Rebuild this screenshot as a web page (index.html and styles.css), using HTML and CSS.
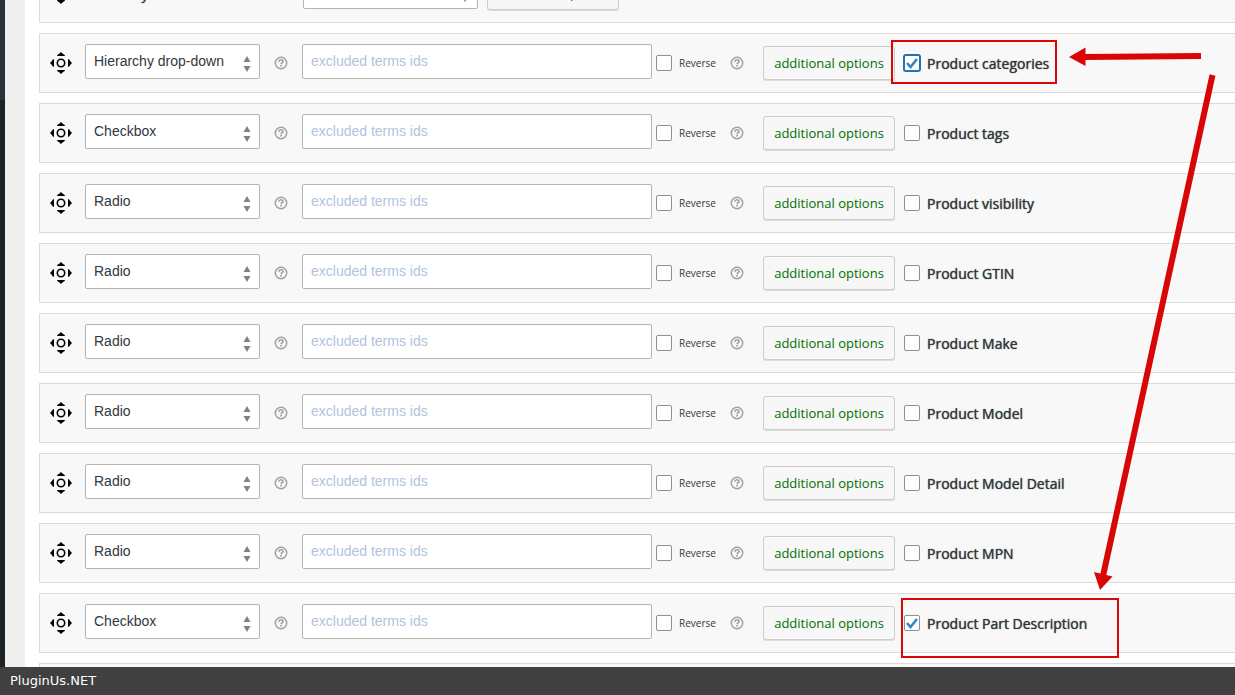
FILE: index.html
```
<!DOCTYPE html>
<html lang="en">
<head>
  <meta charset="utf-8">
  <title>Products filter settings</title>
  <link rel="stylesheet" href="styles.css">
</head>
<body>
  <svg class="sprite" aria-hidden="true">
    <symbol id="move" viewBox="0 0 22 22">
      <path d="M11 0c1 1.200 2.500 2.200 3.800 3v1H7.200V3C8.500 2.200 10 1.200 11 0zM11 22c1-1.200 2.500-2.200 3.800-3v-1H7.200v1c1.300.800 2.800 1.800 3.800 3zM0 11c1.200-1 2.200-2.500 3-3.800h1v7.600H3C2.200 13.500 1.200 12 0 11zM22 11c-1.200-1-2.200-2.500-3-3.800h-1v7.600h1c.800-1.300 1.800-2.800 3-3.800z"/>
      <circle cx="11" cy="11" r="3.700" fill="none" stroke="#000" stroke-width="1.600"/>
    </symbol>
    <symbol id="help" viewBox="0 0 14 14">
      <circle cx="7" cy="7" r="5.700" fill="none" stroke="#a0a0a0" stroke-width="1.500"/>
      <path d="M5 5.700c0-1.200.900-1.900 2-1.900s2 .700 2 1.700C9 6.800 7.100 6.700 7.100 8.200" fill="none" stroke="#a0a0a0" stroke-width="1.600"/>
      <path d="M6.200 9h1.700v1.500H6.200z" fill="#a0a0a0"/>
    </symbol>
  </svg>

  <div class="page">
    <div class="admin-menu"></div>
    <main class="content">
      <ul class="options">
        <li class="option">
          <svg class="move"><use href="#move"/></svg>
          <label class="option-title" for="price">Search by Price</label>
          <select class="control" id="price"><option>No</option></select>
          <button class="button" type="button">additional options</button>
        </li>
        <li class="option">
          <svg class="move"><use href="#move"/></svg>
          <select class="control" aria-label="Type"><option>Hierarchy drop-down</option></select>
          <svg class="help"><use href="#help"/></svg>
          <input class="control excluded" type="text" placeholder="excluded terms ids">
          <label class="reverse"><input type="checkbox">Reverse</label>
          <svg class="help"><use href="#help"/></svg>
          <button class="button" type="button">additional options</button>
          <label class="term"><input class="focused" type="checkbox" checked>Product categories</label>
        </li>
        <li class="option">
          <svg class="move"><use href="#move"/></svg>
          <select class="control" aria-label="Type"><option>Checkbox</option></select>
          <svg class="help"><use href="#help"/></svg>
          <input class="control excluded" type="text" placeholder="excluded terms ids">
          <label class="reverse"><input type="checkbox">Reverse</label>
          <svg class="help"><use href="#help"/></svg>
          <button class="button" type="button">additional options</button>
          <label class="term"><input type="checkbox">Product tags</label>
        </li>
        <li class="option">
          <svg class="move"><use href="#move"/></svg>
          <select class="control" aria-label="Type"><option>Radio</option></select>
          <svg class="help"><use href="#help"/></svg>
          <input class="control excluded" type="text" placeholder="excluded terms ids">
          <label class="reverse"><input type="checkbox">Reverse</label>
          <svg class="help"><use href="#help"/></svg>
          <button class="button" type="button">additional options</button>
          <label class="term"><input type="checkbox">Product visibility</label>
        </li>
        <li class="option">
          <svg class="move"><use href="#move"/></svg>
          <select class="control" aria-label="Type"><option>Radio</option></select>
          <svg class="help"><use href="#help"/></svg>
          <input class="control excluded" type="text" placeholder="excluded terms ids">
          <label class="reverse"><input type="checkbox">Reverse</label>
          <svg class="help"><use href="#help"/></svg>
          <button class="button" type="button">additional options</button>
          <label class="term"><input type="checkbox">Product GTIN</label>
        </li>
        <li class="option">
          <svg class="move"><use href="#move"/></svg>
          <select class="control" aria-label="Type"><option>Radio</option></select>
          <svg class="help"><use href="#help"/></svg>
          <input class="control excluded" type="text" placeholder="excluded terms ids">
          <label class="reverse"><input type="checkbox">Reverse</label>
          <svg class="help"><use href="#help"/></svg>
          <button class="button" type="button">additional options</button>
          <label class="term"><input type="checkbox">Product Make</label>
        </li>
        <li class="option">
          <svg class="move"><use href="#move"/></svg>
          <select class="control" aria-label="Type"><option>Radio</option></select>
          <svg class="help"><use href="#help"/></svg>
          <input class="control excluded" type="text" placeholder="excluded terms ids">
          <label class="reverse"><input type="checkbox">Reverse</label>
          <svg class="help"><use href="#help"/></svg>
          <button class="button" type="button">additional options</button>
          <label class="term"><input type="checkbox">Product Model</label>
        </li>
        <li class="option">
          <svg class="move"><use href="#move"/></svg>
          <select class="control" aria-label="Type"><option>Radio</option></select>
          <svg class="help"><use href="#help"/></svg>
          <input class="control excluded" type="text" placeholder="excluded terms ids">
          <label class="reverse"><input type="checkbox">Reverse</label>
          <svg class="help"><use href="#help"/></svg>
          <button class="button" type="button">additional options</button>
          <label class="term"><input type="checkbox">Product Model Detail</label>
        </li>
        <li class="option">
          <svg class="move"><use href="#move"/></svg>
          <select class="control" aria-label="Type"><option>Radio</option></select>
          <svg class="help"><use href="#help"/></svg>
          <input class="control excluded" type="text" placeholder="excluded terms ids">
          <label class="reverse"><input type="checkbox">Reverse</label>
          <svg class="help"><use href="#help"/></svg>
          <button class="button" type="button">additional options</button>
          <label class="term"><input type="checkbox">Product MPN</label>
        </li>
        <li class="option">
          <svg class="move"><use href="#move"/></svg>
          <select class="control" aria-label="Type"><option>Checkbox</option></select>
          <svg class="help"><use href="#help"/></svg>
          <input class="control excluded" type="text" placeholder="excluded terms ids">
          <label class="reverse"><input type="checkbox">Reverse</label>
          <svg class="help"><use href="#help"/></svg>
          <button class="button" type="button">additional options</button>
          <label class="term"><input type="checkbox" checked>Product Part Description</label>
        </li>
        <li class="option"></li>
      </ul>
    </main>
  </div>

  <footer class="footer">PluginUs.NET</footer>

  <!-- red marks over the two checked terms -->
  <svg class="marks" width="1235" height="695" aria-hidden="true">
    <g fill="none" stroke="#d80606">
      <rect x="892" y="41" width="164" height="42" stroke-width="2"/>
      <rect x="902" y="599" width="216" height="58" stroke-width="2"/>
      <path d="M1201 56L1084 57M1212.500 75L1103 576" stroke-width="6"/>
    </g>
    <path d="M1069 57l16.500-9.500v18.500zM1100 590l-6-18 18.500 4.500z" fill="#d80606"/>
  </svg>
</body>
</html>
```
FILE: styles.css
```
* {
  box-sizing: border-box;
}
body {
  margin: 0;
  height: 100vh;
  display: flex;
  flex-direction: column;
  overflow: hidden;
  background: #fff;
  color: #32373c;
  font-family: "Open Sans", sans-serif;
}
.sprite {
  position: absolute;
  width: 0;
  height: 0;
}
.page {
  flex: 1;
  min-height: 0;
  display: flex;
  overflow: hidden;
}
.admin-menu {
  width: 25px;
  flex-shrink: 0;
  border-right: 20px solid #efefef;
  background: linear-gradient(#2c3338 100px, #1d2327 100px);
}
.content {
  flex: 1;
  min-width: 0;
  padding-left: 14px;
}
/* list is scrolled part way through its first row */
.options {
  list-style: none;
  margin: -37px 0 0;
  padding: 0;
  display: flex;
  flex-direction: column;
  gap: 10px;
}
.option {
  display: flex;
  align-items: center;
  height: 60px;
  padding-left: 10px;
  background: #f8f8f8;
  border: 1px solid #dbdbdb;
  border-right: none;
  white-space: nowrap;
}
.option > * {
  flex-shrink: 0;
}
.move {
  width: 22px;
  height: 22px;
  margin-right: 13px;
}
.option-title {
  width: 218px;
}
.option-title,
.term {
  font-size: 14px;
  text-shadow: 0 0 1px #32373c;
}
.option-title ~ .button {
  margin-left: 9px;
}
.control {
  width: 175px;
  height: 35px;
  margin: 0 0 3px;
  padding: 0 8px 2px;
  border: 1px solid #b4b4b4;
  border-radius: 2px;
  background: #fff;
  color: #32373c;
  font-family: "Liberation Sans", Arial, sans-serif;
  font-size: 14px;
}
select.control {
  appearance: none;
  background: #fff url("data:image/svg+xml,%3Csvg xmlns='http://www.w3.org/2000/svg' width='8' height='16'%3E%3Cpath d='M4 0l3.500 6h-7zM4 16l3.500-6h-7z' fill='%23808085'/%3E%3C/svg%3E") no-repeat right 8px top 11px;
}
.excluded {
  width: 350px;
}
.excluded::placeholder {
  color: #b0c4de;
  opacity: 1;
}
.help {
  width: 14px;
  height: 14px;
  margin: 0 14px;
}
input[type="checkbox"] {
  appearance: none;
  width: 16px;
  height: 16px;
  margin: 0 7px 0 0;
  border: 1px solid #8c8f94;
  border-radius: 2px;
  background: #fff center no-repeat;
}
input[type="checkbox"]:checked {
  background-image: url("data:image/svg+xml,%3Csvg xmlns='http://www.w3.org/2000/svg' width='12' height='12'%3E%3Cpath d='M1 6l3.500 4L11 2' fill='none' stroke='%233582c4' stroke-width='2.600'/%3E%3C/svg%3E");
}
input[type="checkbox"].focused {
  border-color: #2271b1;
  box-shadow: 0 0 0 1px #2271b1;
}
.reverse,
.term {
  display: flex;
  align-items: center;
}
.reverse {
  width: 60px;
  margin-left: 4px;
  font-size: 10px;
}
.reverse + .help {
  margin-right: 19px;
}
.button {
  width: 132px;
  height: 34px;
  padding: 0;
  border: 1px solid #ccc;
  border-radius: 3px;
  background: #f7f7f7;
  box-shadow: 0 1px 0 #ddd;
  color: #007000;
  font-family: "Open Sans", sans-serif;
  font-size: 13px;
}
.term {
  margin-left: 9px;
}
.footer {
  height: 28px;
  padding-left: 10px;
  background: #404040;
  color: #fff;
  font-family: "DejaVu Sans", sans-serif;
  font-size: 13px;
  line-height: 28px;
}
.marks {
  position: absolute;
  top: 0;
  left: 0;
  pointer-events: none;
}
```
